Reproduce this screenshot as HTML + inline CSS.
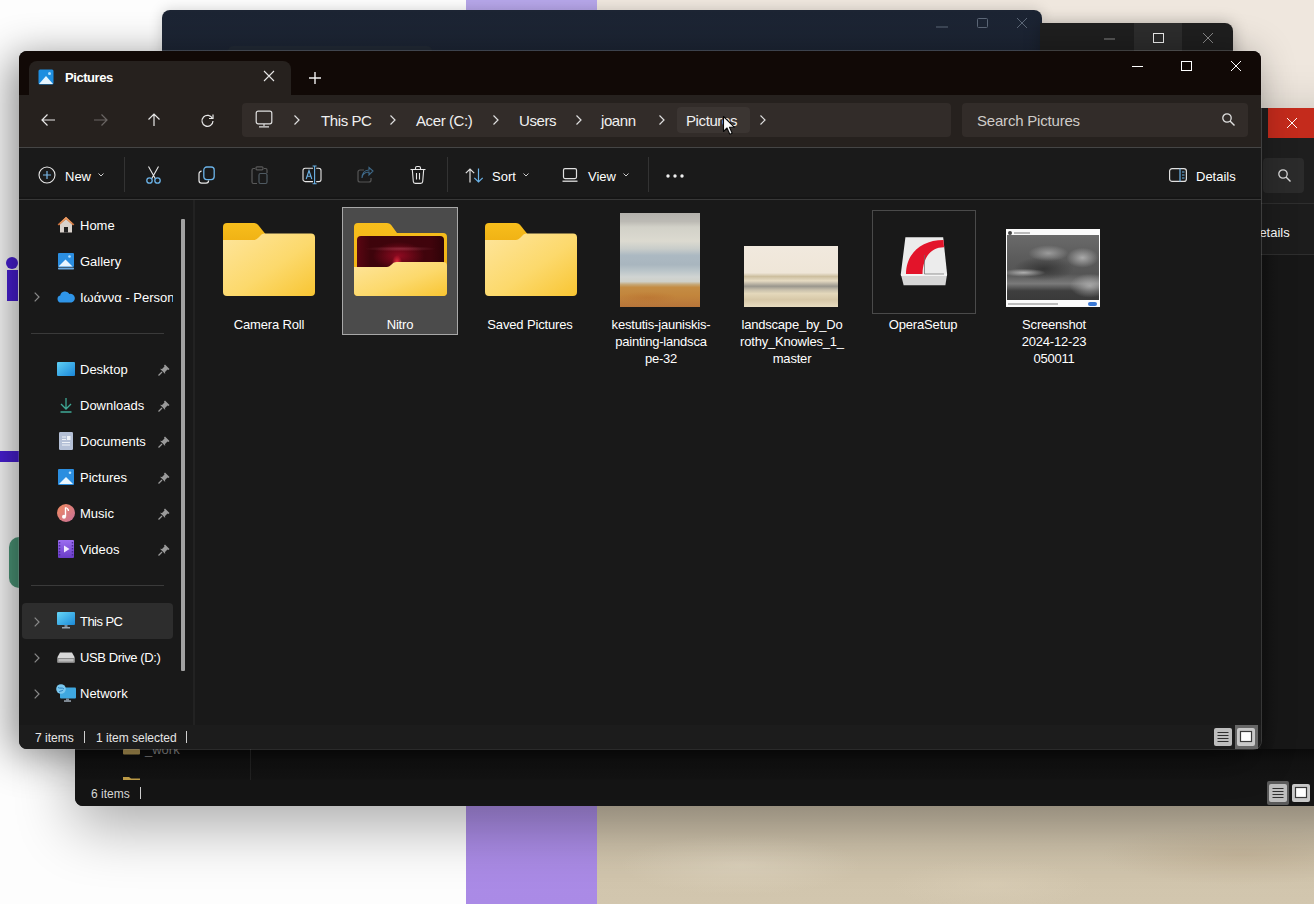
<!DOCTYPE html>
<html><head><meta charset="utf-8">
<style>
*{margin:0;padding:0;box-sizing:border-box}
html,body{width:1314px;height:904px;overflow:hidden;background:#fff;font-family:"Liberation Sans",sans-serif}
.a{position:absolute}
.t{position:absolute;color:#fff;white-space:nowrap;line-height:1}
svg{position:absolute;overflow:visible}
</style></head><body>
<!-- background -->
<div class="a" style="left:0;top:0;width:466px;height:904px;background:#fdfdfd"></div>
<div class="a" style="left:466px;top:0;width:131px;height:904px;background:linear-gradient(#b6a6e9,#aa8ae6)"></div>
<div class="a" style="left:597px;top:0;width:717px;height:904px;background:#efe7de"></div>
<div class="a" style="left:597px;top:806px;width:717px;height:98px;background:
radial-gradient(ellipse 120px 30px at 20% 60%,rgba(225,215,195,.6),transparent),
radial-gradient(ellipse 100px 25px at 55% 80%,rgba(220,208,185,.5),transparent),
radial-gradient(ellipse 140px 30px at 90% 50%,rgba(190,170,140,.45),transparent),
linear-gradient(#cbbfa9,#d0c4ac 40%,#d2c6ae)"></div>
<!-- left page content behind -->
<div class="a" style="left:6px;top:257px;width:12px;height:12px;border-radius:50%;background:#4a20d8"></div>
<div class="a" style="left:7px;top:270px;width:11px;height:31px;background:#4a20d8"></div>
<div class="a" style="left:0;top:451px;width:19px;height:11px;background:#4a20d8"></div>
<div class="a" style="left:9px;top:537px;width:20px;height:51px;border-radius:10px;background:#4e9a7b"></div>

<!-- navy window -->
<div class="a" id="w1" style="left:162px;top:10px;width:880px;height:120px;background:linear-gradient(#1c2433,#1d2636 55%,#171e29);border-radius:8px 8px 0 0;box-shadow:0 0 14px rgba(0,0,0,.18)"></div>
<div class="a" style="left:228px;top:46px;width:204px;height:10px;background:#222a36;border-radius:6px"></div>
<svg style="left:936px;top:26px" width="12" height="2"><path d="M0 1H12" stroke="#5d6878" stroke-width="1"/></svg>
<svg style="left:977px;top:18px" width="11" height="10"><rect x=".5" y=".5" width="10" height="9" rx="1" fill="none" stroke="#5d6878" stroke-width="1"/></svg>
<svg style="left:1017px;top:18px" width="10" height="10"><path d="M0 0L10 10M10 0L0 10" stroke="#5d6878" stroke-width="1"/></svg>
<!-- window 2 -->
<div class="a" id="w2" style="left:1040px;top:23px;width:193px;height:100px;background:#1f1f1f;border-radius:0 8px 0 0;box-shadow:0 0 16px rgba(0,0,0,.25)"></div>
<div class="a" style="left:1134px;top:23px;width:48px;height:30px;background:#2d2d2d"></div>
<svg style="left:1104px;top:38px" width="11" height="2"><path d="M0 1H11" stroke="#8a8a8a" stroke-width="1"/></svg>
<svg style="left:1153px;top:33px" width="11" height="10"><rect x=".5" y=".5" width="10" height="9" fill="none" stroke="#f0f0f0" stroke-width="1"/></svg>
<svg style="left:1203px;top:33px" width="10" height="10"><path d="M0 0L10 10M10 0L0 10" stroke="#8a8a8a" stroke-width="1"/></svg>
<!-- window 3 -->
<div class="a" id="w3" style="left:75px;top:108px;width:1300px;height:698px;background:#171717;border-radius:8px;box-shadow:0 20px 60px rgba(0,0,0,.33)"></div>
<div class="a" style="left:1261px;top:108px;width:60px;height:30px;background:#1e1e1e"></div>
<div class="a" style="left:1268px;top:108px;width:50px;height:30px;background:#c42b1c"></div>
<svg style="left:1287px;top:118px" width="10" height="10"><path d="M0 0L10 10M10 0L0 10" stroke="#fff" stroke-width="1"/></svg>
<div class="a" style="left:1261px;top:138px;width:60px;height:65px;background:#1e1e1e"></div>
<div class="a" style="left:1263px;top:158px;width:41px;height:35px;background:#2b2b2b;border-radius:4px"></div>
<svg style="left:1278px;top:169px" width="13" height="13"><circle cx="5" cy="5" r="4.2" fill="none" stroke="#d8d8d8" stroke-width="1.3"/><path d="M8 8L12.5 12.5" stroke="#d8d8d8" stroke-width="1.4"/></svg>
<div class="a" style="left:1261px;top:203px;width:60px;height:1px;background:#2e2e2e"></div>
<div class="a" style="left:1261px;top:204px;width:60px;height:51px;background:#1c1c1c"></div>
<div class="t" style="left:1250px;top:226px;font-size:13px">Details</div>
<div class="a" style="left:1261px;top:254px;width:60px;height:1px;background:#2e2e2e"></div>
<div class="a" style="left:1261px;top:255px;width:60px;height:525px;background:linear-gradient(90deg,#121212,#171717 15px)"></div>
<div class="a" style="left:75px;top:780px;width:1300px;height:26px;background:#151515;border-radius:0 0 8px 8px"></div>
<div class="a" style="left:75px;top:749px;width:1240px;height:31px;background:linear-gradient(#0b0b0b,#111 40%,#141414)"></div>
<div class="a" style="left:250px;top:749px;width:1px;height:31px;background:#232323"></div>
<svg style="left:123px;top:749px" width="17" height="7"><rect x="0" y="0" width="17" height="5.5" rx="1" fill="#a88f50"/></svg>
<div class="t" style="left:145px;top:743px;font-size:13px;color:#808080">_work</div>
<svg style="left:123px;top:776px" width="17" height="4"><path d="M0 4V1H6L8 2.5H17V4Z" fill="#c6a24a"/></svg>
<div class="t" style="left:91px;top:788px;font-size:12px;color:#d8d8d8">6 items</div>
<div class="a" style="left:140px;top:787px;width:1px;height:12px;background:#d0d0d0"></div>
<div class="a" style="left:1267px;top:781px;width:22px;height:24px;background:#5a5a5a;border-radius:2px"></div>
<svg style="left:1269px;top:784px" width="18" height="18" viewBox="0 0 18 18"><rect x="0" y="0" width="18" height="18" rx="2" fill="#bdbdbd"/><path d="M3.5 4.5H14.5M3.5 7.5H14.5M3.5 10.5H14.5M3.5 13.5H14.5" stroke="#2e2e2e" stroke-width="1.1"/></svg>
<svg style="left:1292px;top:784px" width="18" height="18" viewBox="0 0 18 18"><rect x="0" y="0" width="18" height="18" rx="2" fill="#c8c8c8"/><rect x="3.5" y="3.5" width="11" height="10" fill="#fff" stroke="#3a3a3a" stroke-width="1.2"/></svg>

<!-- main window -->
<div class="a" id="main" style="left:19px;top:51px;width:1242px;height:698px;background:#191919;border-radius:8px;box-shadow:-8px 6px 40px rgba(0,0,0,.45),0 0 0 1px rgba(255,255,255,.2)"></div>
<div class="a" style="left:19px;top:51px;width:1242px;height:44px;background:#110906;border-radius:8px 8px 0 0"></div>
<div class="a" style="left:29px;top:61px;width:262px;height:34px;background:#26211e;border-radius:8px 8px 0 0"></div>
<div class="a" style="left:19px;top:95px;width:1242px;height:52px;background:#26211e"></div>
<div class="a" style="left:242px;top:103px;width:709px;height:34px;background:#322c29;border-radius:4px"></div>
<div class="a" style="left:962px;top:103px;width:286px;height:34px;background:#322c29;border-radius:4px"></div>
<div class="a" style="left:19px;top:147px;width:1242px;height:1px;background:#454545"></div>
<div class="a" style="left:19px;top:148px;width:1242px;height:51px;background:#1a1a1a"></div>
<div class="a" style="left:19px;top:197px;width:1242px;height:2px;background:#151515"></div><div class="a" style="left:19px;top:199px;width:1242px;height:1px;background:#383838"></div>
<div class="a" style="left:19px;top:725px;width:1242px;height:24px;background:#1c1c1c;border-radius:0 0 8px 8px"></div>

<!-- tab -->
<svg style="left:38px;top:69px" width="16" height="16" viewBox="0 0 16 16"><rect x="0.5" y="0.5" width="15" height="15" rx="1.5" fill="#1e8ee0"/><circle cx="11.5" cy="4.5" r="1.5" fill="#aee0ff"/><path d="M1 15 L8 7 L15 15Z" fill="#e6f5ff"/></svg>
<div class="t" style="left:65px;top:71px;font-size:13px;font-weight:bold;letter-spacing:-.45px">Pictures</div>
<svg style="left:264px;top:71px" width="10" height="10"><path d="M0 0L10 10M10 0L0 10" stroke="#e6e6e6" stroke-width="1.1"/></svg>
<svg style="left:309px;top:72px" width="12" height="12"><path d="M6 0V12M0 6H12" stroke="#f0f0f0" stroke-width="1.4"/></svg>
<!-- window controls -->
<svg style="left:1132px;top:66px" width="11" height="1"><path d="M0 .5H11" stroke="#fff" stroke-width="1"/></svg>
<svg style="left:1181px;top:61px" width="11" height="10"><rect x=".5" y=".5" width="10" height="9" fill="none" stroke="#fff" stroke-width="1"/></svg>
<svg style="left:1231px;top:61px" width="10" height="10"><path d="M0 0L10 10M10 0L0 10" stroke="#fff" stroke-width="1"/></svg>

<!-- nav buttons -->
<svg style="left:41px;top:114px" width="14" height="12"><path d="M1 6H14M6.5 .5L1 6L6.5 11.5" fill="none" stroke="#e8e8e8" stroke-width="1.2"/></svg>
<svg style="left:94px;top:114px" width="14" height="12"><path d="M0 6H13M7.5 .5L13 6L7.5 11.5" fill="none" stroke="#6a6664" stroke-width="1.2"/></svg>
<svg style="left:147px;top:113px" width="14" height="13"><path d="M7 1V13M1.5 6.5L7 1L12.5 6.5" fill="none" stroke="#e8e8e8" stroke-width="1.2"/></svg>
<svg style="left:201px;top:114px" width="13" height="12"><path d="M11.5 4.5A5.5 5.5 0 1 0 12 7" fill="none" stroke="#e8e8e8" stroke-width="1.2"/><path d="M12 0.5V4.5H8" fill="none" stroke="#e8e8e8" stroke-width="1.2"/></svg>
<!-- breadcrumb -->
<svg style="left:255px;top:110px" width="18" height="18" viewBox="0 0 18 18"><rect x="1.2" y="1.2" width="15.6" height="12.6" rx="2" fill="none" stroke="#e0e0e0" stroke-width="1.2"/><path d="M9 14V16M4 16.8H14" stroke="#e0e0e0" stroke-width="1.2"/></svg>
<svg class="chev" style="left:294px;top:115px" width="6" height="10"><path d="M.5 .5L5 5L.5 9.5" fill="none" stroke="#e0e0e0" stroke-width="1.2"/></svg>
<div class="t" style="left:321px;top:113px;font-size:15px;letter-spacing:-.4px;color:#f0f0f0">This PC</div>
<svg style="left:390px;top:115px" width="6" height="10"><path d="M.5 .5L5 5L.5 9.5" fill="none" stroke="#e0e0e0" stroke-width="1.2"/></svg>
<div class="t" style="left:416px;top:113px;font-size:15px;letter-spacing:-.4px;color:#f0f0f0">Acer (C:)</div>
<svg style="left:493px;top:115px" width="6" height="10"><path d="M.5 .5L5 5L.5 9.5" fill="none" stroke="#e0e0e0" stroke-width="1.2"/></svg>
<div class="t" style="left:519px;top:113px;font-size:15px;letter-spacing:-.4px;color:#f0f0f0">Users</div>
<svg style="left:576px;top:115px" width="6" height="10"><path d="M.5 .5L5 5L.5 9.5" fill="none" stroke="#e0e0e0" stroke-width="1.2"/></svg>
<div class="t" style="left:601px;top:113px;font-size:15px;letter-spacing:-.4px;color:#f0f0f0">joann</div>
<svg style="left:659px;top:115px" width="6" height="10"><path d="M.5 .5L5 5L.5 9.5" fill="none" stroke="#e0e0e0" stroke-width="1.2"/></svg>
<div class="a" style="left:677px;top:107px;width:73px;height:26px;background:#3b3532;border-radius:4px"></div>
<div class="t" style="left:686px;top:113px;font-size:15px;letter-spacing:-.4px;color:#f0f0f0">Pictures</div>
<svg style="left:760px;top:115px" width="6" height="10"><path d="M.5 .5L5 5L.5 9.5" fill="none" stroke="#e0e0e0" stroke-width="1.2"/></svg>
<!-- search -->
<div class="t" style="left:977px;top:113px;font-size:15px;letter-spacing:-.2px;color:#cfcbc8">Search Pictures</div>
<svg style="left:1222px;top:113px" width="13" height="13"><circle cx="5" cy="5" r="4.2" fill="none" stroke="#e0e0e0" stroke-width="1.3"/><path d="M8 8L12.5 12.5" stroke="#e0e0e0" stroke-width="1.4"/></svg>
<!-- cursor -->
<svg style="left:722px;top:115px" width="14" height="21" viewBox="0 0 14 21"><path d="M1.5 1.5V16.5L5 13L7.8 19.2L10.2 18.2L7.5 12.2H12.3Z" fill="#fafafa" stroke="#0a0a0a" stroke-width="1.1" stroke-linejoin="round"/></svg>
<!-- command bar -->
<svg style="left:38px;top:166px" width="18" height="18"><circle cx="9" cy="9" r="8" fill="none" stroke="#e8e8e8" stroke-width="1.1"/><path d="M9 5V13M5 9H13" stroke="#78b7e8" stroke-width="1.2"/></svg>
<div class="t" style="left:65px;top:170px;font-size:13px">New</div>
<svg style="left:98px;top:173px" width="6" height="4"><path d="M.5 .5L3 3L5.5 .5" fill="none" stroke="#cfcfcf" stroke-width="1"/></svg>
<div class="a" style="left:124px;top:157px;width:1px;height:35px;background:#333"></div>
<!-- scissors -->
<svg style="left:145px;top:166px" width="17" height="18" viewBox="0 0 17 18"><path d="M3.5 0.5L10.5 13M13.5 0.5L6.5 13" fill="none" stroke="#e8e8e8" stroke-width="1.1"/><circle cx="4.5" cy="14.5" r="2.7" fill="none" stroke="#6bb3e8" stroke-width="1.3"/><circle cx="12.5" cy="14.5" r="2.7" fill="none" stroke="#6bb3e8" stroke-width="1.3"/></svg>
<!-- copy -->
<svg style="left:198px;top:166px" width="18" height="18" viewBox="0 0 18 18"><rect x="5.8" y="1" width="10.4" height="12.6" rx="3" fill="none" stroke="#6bb3e8" stroke-width="1.3"/><path d="M3.6 5.2A2.6 2.6 0 0 0 1 7.8V14.6A2.6 2.6 0 0 0 3.6 17.2H8A2.6 2.6 0 0 0 10.6 14.6" fill="none" stroke="#e8e8e8" stroke-width="1.2"/></svg>
<!-- paste dim -->
<svg style="left:251px;top:166px" width="17" height="18" viewBox="0 0 17 18"><path d="M4 2.5H2.5A1.5 1.5 0 0 0 1 4V16A1.5 1.5 0 0 0 2.5 17.5H6M13 2.5H14.5A1.5 1.5 0 0 1 16 4V7" fill="none" stroke="#5a5a5a" stroke-width="1.2"/><rect x="5" y=".8" width="7" height="3" rx="1" fill="none" stroke="#5a5a5a" stroke-width="1.2"/><rect x="8" y="7.5" width="8" height="10" rx="1.5" fill="none" stroke="#4f5a62" stroke-width="1.2"/></svg>
<!-- rename -->
<svg style="left:302px;top:165px" width="20" height="20" viewBox="0 0 20 20"><path d="M11 3.2H3.2A2.2 2.2 0 0 0 1 5.4V14.4A2.2 2.2 0 0 0 3.2 16.6H11M14.2 3.2H16.8A2.2 2.2 0 0 1 19 5.4V14.4A2.2 2.2 0 0 1 16.8 16.6H14.2" fill="none" stroke="#e8e8e8" stroke-width="1.1"/><path d="M12.6 1V18.8M10.6 1H14.6M10.6 18.8H14.6" stroke="#6bb3e8" stroke-width="1.1"/><path d="M4.2 14L7 5.6L9.8 14M5.2 11.2H8.8" fill="none" stroke="#6bb3e8" stroke-width="1.1"/></svg>
<!-- share dim -->
<svg style="left:357px;top:167px" width="17" height="16" viewBox="0 0 17 16"><path d="M7 3H3A2 2 0 0 0 1 5V13A2 2 0 0 0 3 15H12A2 2 0 0 0 14 13V11" fill="none" stroke="#555" stroke-width="1.2"/><path d="M5 11C5.5 7 8.5 5 12 5V8L16 4L12 0.5V3C7.5 3 5 6.5 5 11Z" fill="none" stroke="#3f6a8a" stroke-width="1.1"/></svg>
<!-- delete -->
<svg style="left:410px;top:166px" width="16" height="18" viewBox="0 0 16 18"><path d="M.5 3.5H15.5M5.5 3.5V2A1.5 1.5 0 0 1 7 .5H9A1.5 1.5 0 0 1 10.5 2V3.5M2.3 3.5L3.3 15.5A2 2 0 0 0 5.3 17.4H10.7A2 2 0 0 0 12.7 15.5L13.7 3.5M6.5 7V13.5M9.5 7V13.5" fill="none" stroke="#e8e8e8" stroke-width="1.1"/></svg>
<div class="a" style="left:447px;top:157px;width:1px;height:35px;background:#333"></div>
<!-- sort -->
<svg style="left:465px;top:168px" width="19" height="15" viewBox="0 0 19 15"><path d="M5 14.5V1M.8 5.2L5 1L9.2 5.2" fill="none" stroke="#e0e0e0" stroke-width="1.2"/><path d="M13.5 .5V14M9.3 9.8L13.5 14L17.7 9.8" fill="none" stroke="#6bb3e8" stroke-width="1.2"/></svg>
<div class="t" style="left:492px;top:170px;font-size:13px">Sort</div>
<svg style="left:523px;top:173px" width="6" height="4"><path d="M.5 .5L3 3L5.5 .5" fill="none" stroke="#cfcfcf" stroke-width="1"/></svg>
<!-- view -->
<svg style="left:562px;top:168px" width="16" height="14" viewBox="0 0 16 14"><rect x="1.5" y=".6" width="13" height="10" rx="1.5" fill="none" stroke="#e0e0e0" stroke-width="1.2"/><path d="M.5 13.2H15.5" stroke="#e0e0e0" stroke-width="1.3"/></svg>
<div class="t" style="left:588px;top:170px;font-size:13px">View</div>
<svg style="left:623px;top:173px" width="6" height="4"><path d="M.5 .5L3 3L5.5 .5" fill="none" stroke="#cfcfcf" stroke-width="1"/></svg>
<div class="a" style="left:648px;top:157px;width:1px;height:35px;background:#333"></div>
<svg style="left:666px;top:174px" width="18" height="4"><circle cx="2" cy="2" r="1.7" fill="#f0f0f0"/><circle cx="9" cy="2" r="1.7" fill="#f0f0f0"/><circle cx="16" cy="2" r="1.7" fill="#f0f0f0"/></svg>
<!-- details -->
<svg style="left:1169px;top:168px" width="18" height="14" viewBox="0 0 18 14"><rect x=".6" y=".6" width="16.8" height="12.8" rx="2.5" fill="none" stroke="#e0e0e0" stroke-width="1.2"/><path d="M11 .6V13.4" stroke="#6bb3e8" stroke-width="1.2"/><path d="M13 4H15.5M13 7H15.5M13 10H15.5" stroke="#6bb3e8" stroke-width="1"/></svg>
<div class="t" style="left:1196px;top:170px;font-size:13px">Details</div>
<!-- nav pane -->
<div class="a" style="left:181px;top:219px;width:4px;height:452px;background:#a2a2a2;border-radius:1px"></div>
<div class="a" style="left:193px;top:200px;width:2px;height:525px;background:#222"></div>
<!-- Home -->
<svg style="left:57px;top:216px" width="18" height="17" viewBox="0 0 18 17"><path d="M9 1L1 8.5H3V16.5H15V8.5H17Z" fill="#d9d2cc"/><path d="M9 .8L.6 8.6L2 9.5L9 3.3L16 9.5L17.4 8.6Z" fill="#c9703a"/><path d="M9 1L3 6.7V8L9 3L15 8V6.7Z" fill="#e99a62"/><rect x="7" y="11" width="4" height="5.5" fill="#232323"/></svg>
<div class="t" style="left:80px;top:219px;font-size:13px">Home</div>
<!-- Gallery -->
<svg style="left:57px;top:252px" width="18" height="18" viewBox="0 0 18 18"><rect x="1" y="15.5" width="16" height="2" rx=".7" fill="#6aa9e0"/><rect x="1" y="1" width="16" height="14" rx="1" fill="#2b8ee0"/><circle cx="12.5" cy="4.5" r="1.3" fill="#b8e3ff"/><path d="M1.5 14.5L8.5 7.5L15.5 14.5Z" fill="#e9f6ff"/></svg>
<div class="t" style="left:80px;top:255px;font-size:13px">Gallery</div>
<!-- OneDrive -->
<svg style="left:34px;top:292px" width="6" height="10"><path d="M.7 .7L5 5L.7 9.3" fill="none" stroke="#8a8a8a" stroke-width="1.2"/></svg>
<svg style="left:57px;top:290px" width="18" height="13" viewBox="0 0 18 13"><path d="M4 12.5A3.5 3.5 0 0 1 3.2 5.6A5 5 0 0 1 12.5 4A3.8 3.8 0 0 1 14.5 12.5Z" fill="#2f95e8"/></svg>
<div class="a" style="left:80px;top:288px;width:93px;height:18px;overflow:hidden"><div class="t" style="left:0;top:3px;font-size:13px">Ιωάννα - Personal</div></div>
<div class="a" style="left:31px;top:333px;width:133px;height:1px;background:#3a3a3a"></div>
<!-- Desktop -->
<svg style="left:57px;top:362px" width="18" height="14" viewBox="0 0 18 14"><defs><linearGradient id="gd" x1="0" y1="0" x2="1" y2="1"><stop offset="0" stop-color="#5fd0f5"/><stop offset="1" stop-color="#1a86d8"/></linearGradient></defs><rect x="0" y="0" width="18" height="14" rx="1" fill="url(#gd)"/></svg>
<div class="t" style="left:80px;top:363px;font-size:13px">Desktop</div>
<!-- Downloads -->
<svg style="left:59px;top:397px" width="14" height="16" viewBox="0 0 14 16"><path d="M7 1V12M2 7L7 12L12 7M1.5 15H12.5" fill="none" stroke="#3fa996" stroke-width="1.3"/></svg>
<div class="t" style="left:80px;top:399px;font-size:13px">Downloads</div>
<!-- Documents -->
<svg style="left:59px;top:432px" width="14" height="18" viewBox="0 0 14 18"><rect x="0" y="0" width="14" height="18" rx="1.2" fill="#b4c0d6"/><path d="M3 5H7M3 7.5H7M3 10.5H11M3 13H11" stroke="#eef2f8" stroke-width="1"/><rect x="8" y="4" width="3.5" height="4" fill="#eef2f8"/></svg>
<div class="t" style="left:80px;top:435px;font-size:13px">Documents</div>
<!-- Pictures -->
<svg style="left:58px;top:469px" width="16" height="16" viewBox="0 0 16 16"><rect x="0" y="0" width="16" height="16" rx="1" fill="#2b8ee0"/><circle cx="12" cy="3.8" r="1.3" fill="#b8e3ff"/><path d="M1 15L8 8L15 15Z" fill="#e9f6ff"/></svg>
<div class="t" style="left:80px;top:471px;font-size:13px">Pictures</div>
<!-- Music -->
<svg style="left:57px;top:504px" width="18" height="18" viewBox="0 0 18 18"><defs><linearGradient id="gm" x1="0" y1="0" x2="1" y2="1"><stop offset="0" stop-color="#f08a5d"/><stop offset="1" stop-color="#c8709a"/></linearGradient></defs><circle cx="9" cy="9" r="9" fill="url(#gm)"/><path d="M8.5 3.5V12.5" stroke="#fff" stroke-width="1.4"/><circle cx="7" cy="12.8" r="2" fill="#fff"/><path d="M8.5 3.5C10 4 11.5 5 11.5 7" fill="none" stroke="#fff" stroke-width="1.3"/></svg>
<div class="t" style="left:80px;top:507px;font-size:13px">Music</div>
<!-- Videos -->
<svg style="left:58px;top:540px" width="16" height="18" viewBox="0 0 16 18"><defs><linearGradient id="gv" x1="0" y1="0" x2="0" y2="1"><stop offset="0" stop-color="#9b6cf0"/><stop offset="1" stop-color="#6a3cc8"/></linearGradient></defs><rect x="0" y="0" width="16" height="18" rx="1" fill="url(#gv)"/><path d="M1.5 2V16M14.5 2V16" stroke="#4c2a9a" stroke-width="1.5" stroke-dasharray="1.5 1.5"/><path d="M6 5.5V12.5L11.5 9Z" fill="#f0e6ff"/></svg>
<div class="t" style="left:80px;top:543px;font-size:13px">Videos</div>
<!-- pins -->
<svg style="left:158px;top:364px" width="12" height="12" viewBox="0 0 12 12"><path d="M.5 11.5L4 8" stroke="#9a9a9a" stroke-width="1.3"/><path d="M7 .5L11.5 5L10.5 6L9.5 5.5L7 8L7.2 10L2 4.8L4 5L6.5 2.5L6 1.5Z" fill="#9a9a9a"/></svg>
<svg style="left:158px;top:400px" width="12" height="12" viewBox="0 0 12 12"><path d="M.5 11.5L4 8" stroke="#9a9a9a" stroke-width="1.3"/><path d="M7 .5L11.5 5L10.5 6L9.5 5.5L7 8L7.2 10L2 4.8L4 5L6.5 2.5L6 1.5Z" fill="#9a9a9a"/></svg>
<svg style="left:158px;top:436px" width="12" height="12" viewBox="0 0 12 12"><path d="M.5 11.5L4 8" stroke="#9a9a9a" stroke-width="1.3"/><path d="M7 .5L11.5 5L10.5 6L9.5 5.5L7 8L7.2 10L2 4.8L4 5L6.5 2.5L6 1.5Z" fill="#9a9a9a"/></svg>
<svg style="left:158px;top:472px" width="12" height="12" viewBox="0 0 12 12"><path d="M.5 11.5L4 8" stroke="#9a9a9a" stroke-width="1.3"/><path d="M7 .5L11.5 5L10.5 6L9.5 5.5L7 8L7.2 10L2 4.8L4 5L6.5 2.5L6 1.5Z" fill="#9a9a9a"/></svg>
<svg style="left:158px;top:508px" width="12" height="12" viewBox="0 0 12 12"><path d="M.5 11.5L4 8" stroke="#9a9a9a" stroke-width="1.3"/><path d="M7 .5L11.5 5L10.5 6L9.5 5.5L7 8L7.2 10L2 4.8L4 5L6.5 2.5L6 1.5Z" fill="#9a9a9a"/></svg>
<svg style="left:158px;top:544px" width="12" height="12" viewBox="0 0 12 12"><path d="M.5 11.5L4 8" stroke="#9a9a9a" stroke-width="1.3"/><path d="M7 .5L11.5 5L10.5 6L9.5 5.5L7 8L7.2 10L2 4.8L4 5L6.5 2.5L6 1.5Z" fill="#9a9a9a"/></svg>
<div class="a" style="left:31px;top:585px;width:133px;height:1px;background:#3a3a3a"></div>
<!-- This PC -->
<div class="a" style="left:22px;top:603px;width:151px;height:36px;background:#2d2d2d;border-radius:4px"></div>
<svg style="left:34px;top:617px" width="6" height="10"><path d="M.7 .7L5 5L.7 9.3" fill="none" stroke="#8a8a8a" stroke-width="1.2"/></svg>
<svg style="left:57px;top:612px" width="18" height="17" viewBox="0 0 18 17"><defs><linearGradient id="gp" x1="0" y1="0" x2="1" y2="1"><stop offset="0" stop-color="#66d6f7"/><stop offset="1" stop-color="#1c8ad8"/></linearGradient></defs><rect x="0" y="0" width="18" height="13" rx="1" fill="url(#gp)"/><rect x="7.5" y="13" width="3" height="2" fill="#7a8a98"/><rect x="5" y="15" width="8" height="1.5" fill="#9aa6b2"/></svg>
<div class="t" style="left:80px;top:615px;font-size:13px;letter-spacing:-.55px">This PC</div>
<!-- USB -->
<svg style="left:34px;top:653px" width="6" height="10"><path d="M.7 .7L5 5L.7 9.3" fill="none" stroke="#8a8a8a" stroke-width="1.2"/></svg>
<svg style="left:57px;top:652px" width="18" height="11" viewBox="0 0 18 11"><path d="M3 .5H15L17.5 5V10.5H.5V5Z" fill="#d8d8d8"/><rect x=".5" y="6" width="17" height="4.5" fill="#8a8a8a"/><rect x="1.5" y="7" width="15" height="2.5" fill="#bdbdbd"/></svg>
<div class="t" style="left:80px;top:651px;font-size:13px;letter-spacing:-.4px">USB Drive (D:)</div>
<!-- Network -->
<svg style="left:34px;top:689px" width="6" height="10"><path d="M.7 .7L5 5L.7 9.3" fill="none" stroke="#8a8a8a" stroke-width="1.2"/></svg>
<svg style="left:56px;top:684px" width="20" height="18" viewBox="0 0 20 18"><rect x="4" y="3.5" width="16" height="11" rx="1" fill="#3fa8e0"/><rect x="10" y="14.5" width="3" height="2" fill="#7a8a98"/><rect x="8" y="16.3" width="7" height="1.5" fill="#9aa6b2"/><circle cx="5" cy="5" r="4.8" fill="#7ac8ef"/><path d="M2 3.5C4 5 6 3 8 5M3 8C4 6.5 6 7.5 7 6" fill="none" stroke="#2a7fc0" stroke-width="1"/></svg>
<div class="t" style="left:80px;top:687px;font-size:13px">Network</div>
<!-- content -->
<svg width="0" height="0" style="left:0;top:0"><defs>
<linearGradient id="ff" x1="0" y1="0" x2="1" y2="1"><stop offset="0" stop-color="#fee59c"/><stop offset=".55" stop-color="#fcd96c"/><stop offset="1" stop-color="#f8c532"/></linearGradient>
<linearGradient id="fb" x1="0" y1="0" x2="0" y2="1"><stop offset="0" stop-color="#f7be1c"/><stop offset="1" stop-color="#eeae12"/></linearGradient>
<radialGradient id="nr" cx=".5" cy=".85" r=".45" gradientTransform="translate(.25 0) scale(.5 1)"><stop offset="0" stop-color="#f0203a"/><stop offset=".4" stop-color="#9a0a1c"/><stop offset="1" stop-color="#2a0408"/></radialGradient>
</defs></svg>
<!-- Camera Roll -->
<svg style="left:223px;top:223px" width="92" height="73" viewBox="0 0 92 73"><path d="M4 0H31Q33.5 0 35 1.8L42 10.5V24H0V4Q0 0 4 0Z" fill="url(#fb)"/><path d="M0 17H31Q33 17 35 15L38.5 11.5Q40 10.5 42 10.5H88Q92 10.5 92 14.5V69Q92 73 88 73H4Q0 73 0 69Z" fill="url(#ff)"/></svg>
<div class="t lbl" style="left:219px;top:318px;width:100px;text-align:center;font-size:13px;letter-spacing:-.15px">Camera Roll</div>
<!-- Nitro -->
<div class="a" style="left:342px;top:207px;width:116px;height:128px;background:#4b4b4b;border:1px solid #a8a8a8"></div>
<svg style="left:354px;top:223px" width="93" height="73" viewBox="0 0 93 73"><path d="M4 0H33Q35.5 0 37 1.8L43 10H89Q93 10 93 14V69Q93 73 89 73H4Q0 73 0 69V4Q0 0 4 0Z" fill="url(#fb)"/></svg>
<div class="a" style="left:357px;top:236px;width:87px;height:32px;border-radius:4px 4px 0 0;background:
radial-gradient(ellipse 5px 7px at 46% 82%,rgba(255,50,70,.85),transparent),
radial-gradient(ellipse 36px 2.5px at 50% 40%,rgba(210,100,120,.35),transparent),
radial-gradient(ellipse 26px 14px at 48% 62%,rgba(170,12,40,.75),transparent),
linear-gradient(90deg,#5a0612,#3e040b 15%,#40040c 85%,#2e0308)"></div>
<svg style="left:354px;top:223px" width="93" height="73" viewBox="0 0 93 73"><path d="M0 44H33Q35 44 37 42L39.5 39.8Q41 39 43 39H89Q93 39 93 43V69Q93 73 89 73H4Q0 73 0 69Z" fill="url(#ff)"/></svg>
<div class="t" style="left:350px;top:318px;width:100px;text-align:center;font-size:13px;letter-spacing:-.15px">Nitro</div>
<!-- Saved Pictures -->
<svg style="left:485px;top:223px" width="92" height="73" viewBox="0 0 92 73"><path d="M4 0H31Q33.5 0 35 1.8L42 10.5V24H0V4Q0 0 4 0Z" fill="url(#fb)"/><path d="M0 17H31Q33 17 35 15L38.5 11.5Q40 10.5 42 10.5H88Q92 10.5 92 14.5V69Q92 73 88 73H4Q0 73 0 69Z" fill="url(#ff)"/></svg>
<div class="t" style="left:470px;top:318px;width:120px;text-align:center;font-size:13px;letter-spacing:-.15px">Saved Pictures</div>
<!-- kestutis -->
<div class="a" style="left:620px;top:213px;width:80px;height:94px;background:
radial-gradient(ellipse 30px 6px at 35% 90%,rgba(180,100,40,.35),transparent),
linear-gradient(#b3b1ac 0,#bcbab4 9%,#d2d1c8 15%,#dcdad0 30%,#c9cdca 38%,#acb9c2 45%,#a9b6bf 55%,#bcc6ca 62%,#d0d4d2 68%,#cfd0c9 73%,#c6a878 76%,#c48c44 79%,#c2853c 88%,#b7753a 100%)"></div>
<div class="t" style="left:601px;top:316px;width:120px;text-align:center;font-size:13px;line-height:17px;letter-spacing:-.2px">kestutis-jauniskis-<br>painting-landsca<br>pe-32</div>
<!-- landscape -->
<div class="a" style="left:744px;top:246px;width:94px;height:61px;background:linear-gradient(#f1e9de 0,#efe6d8 44%,#cdbf9f 50%,#e6dbc3 57%,#9a978e 66%,#c8c0ac 72%,#e4d8bb 78%,#d7c8a8 88%,#e8dcc0 100%)"></div>
<div class="t" style="left:732px;top:316px;width:120px;text-align:center;font-size:13px;line-height:17px;letter-spacing:-.2px">landscape_by_Do<br>rothy_Knowles_1_<br>master</div>
<!-- Opera -->
<div class="a" style="left:872px;top:210px;width:104px;height:104px;border:1px solid #4a4a4a"></div>
<svg style="left:893px;top:228px" width="60" height="64" viewBox="0 0 60 64"><path d="M12.4 9.2H50.2L54.1 46H7.8Z" fill="#ececec"/><path d="M7.8 46H54.1L52.4 57.3H10.6Z" fill="#d6d6d6"/><path d="M7.8 46H54.1L53.8 48H8Z" fill="#f4f4f4"/><path d="M13 46C13 26 28 12 50.5 12L51 19.2C39 19 30 28 29.5 46Z" fill="#e3142a"/><path d="M31.5 27V46M31.5 46H51" stroke="#6a6a6a" stroke-width=".7" fill="none"/></svg>
<div class="t" style="left:863px;top:318px;width:120px;text-align:center;font-size:13px;letter-spacing:-.15px">OperaSetup</div>
<!-- Screenshot -->
<div class="a" style="left:1006px;top:229px;width:94px;height:78px;background:#fbfbfb"></div>
<div class="a" style="left:1008px;top:231px;width:4px;height:4px;border-radius:50%;background:#444"></div>
<div class="a" style="left:1014px;top:232px;width:16px;height:2px;background:#bbb"></div>
<div class="a" style="left:1007px;top:235px;width:92px;height:65px;background:
radial-gradient(ellipse 20px 8px at 45% 28%,rgba(170,170,170,.8),transparent),
radial-gradient(ellipse 16px 10px at 82% 35%,rgba(190,190,190,.8),transparent),
radial-gradient(ellipse 22px 4px at 18% 58%,rgba(200,200,200,.8),transparent),
radial-gradient(ellipse 20px 12px at 90% 78%,rgba(180,180,180,.8),transparent),
radial-gradient(ellipse 30px 12px at 40% 52%,rgba(40,40,40,.7),transparent),
linear-gradient(#6a6a6a,#5a5a5a 40%,#555 60%,#7a7a7a 75%,#3e3e3e 86%,#3a3a3a)"></div>
<div class="a" style="left:1008px;top:303px;width:50px;height:2px;background:#bdbdbd"></div>
<div class="a" style="left:1088px;top:302px;width:9px;height:4px;background:#3a78d4;border-radius:2px"></div>
<div class="t" style="left:994px;top:316px;width:120px;text-align:center;font-size:13px;line-height:17px;letter-spacing:-.2px">Screenshot<br>2024-12-23<br>050011</div>

<!-- status bar -->
<div class="t" style="left:35px;top:732px;font-size:12px;color:#e6e6e6">7 items</div>
<div class="a" style="left:84px;top:731px;width:1px;height:12px;background:#d0d0d0"></div>
<div class="t" style="left:96px;top:732px;font-size:12px;color:#e6e6e6">1 item selected</div>
<div class="a" style="left:186px;top:731px;width:1px;height:12px;background:#d0d0d0"></div>
<svg style="left:1214px;top:728px" width="18" height="18" viewBox="0 0 18 18"><rect x="0" y="0" width="18" height="18" rx="2" fill="#bdbdbd"/><path d="M3.5 4.5H14.5M3.5 7.5H14.5M3.5 10.5H14.5M3.5 13.5H14.5" stroke="#2e2e2e" stroke-width="1.1"/></svg>
<div class="a" style="left:1235px;top:725px;width:23px;height:24px;background:#666"></div>
<svg style="left:1237px;top:728px" width="18" height="18" viewBox="0 0 18 18"><rect x="0" y="0" width="18" height="18" rx="2" fill="#c8c8c8"/><rect x="3.5" y="3.5" width="11" height="10" fill="#fff" stroke="#3a3a3a" stroke-width="1.2"/></svg>
</body></html>
